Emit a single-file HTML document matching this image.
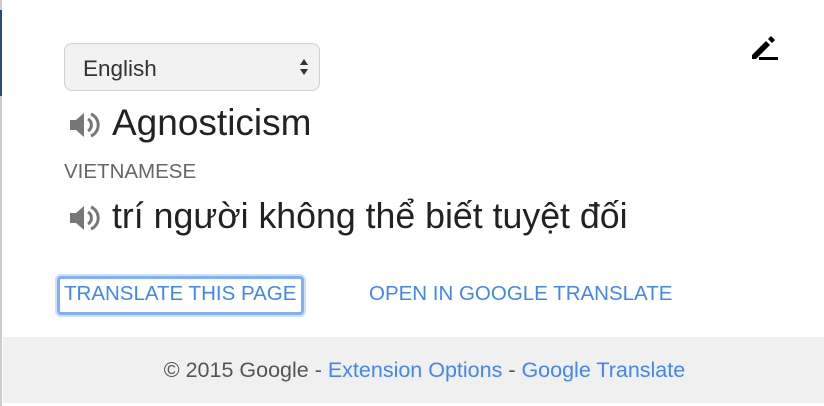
<!DOCTYPE html>
<html><head><meta charset="utf-8"><style>
body{margin:0;width:824px;height:406px;background:#fff;position:relative;overflow:hidden;font-family:"Liberation Sans",sans-serif}
.lb{position:absolute;left:0;top:0;width:2px;height:406px;background:#ccc}
.lbb{position:absolute;left:0;top:10px;width:2px;height:86px;background:#2a4a7a}
.sel{position:absolute;left:64px;top:43px;width:256px;height:48px;box-sizing:border-box;border:1px solid #d0d0d0;border-radius:8px;background:#f2f2f2}
.sel span{position:absolute;left:18px;top:12px;font-size:22.5px;color:#333}
.arr{position:absolute;right:10px;top:14px}
.t{position:absolute;color:#222}
.spk{position:absolute}
.foot{position:absolute;left:3px;top:337px;width:799px;padding-left:22px;height:66px;background:#f0f0f0;text-align:center;font-size:21.5px;color:#555;line-height:66px}
a{color:#4285f4;text-decoration:none}
.btn{position:absolute;font-size:20.5px;color:#4285f4;top:282px}
.focus{position:absolute;left:57px;top:276px;width:247px;height:39px;box-sizing:border-box;border:3px solid #7fb0f8;border-radius:4px;box-shadow:0 0 0 2px #cfe0fb}
</style></head><body>
<div class="lb"></div><div class="lbb"></div>
<div class="sel"><span>English</span>
<svg class="arr" width="10" height="18" viewBox="0 0 10 18"><path d="M5 1L9 7H1z M5 17L9 11H1z" fill="#333"/></svg></div>
<svg style="position:absolute;left:750px;top:35px" width="30" height="28" viewBox="0 0 30 28"><path d="M2 20L16 6l4 4L6 24H2z M18 4l3-3 4 4-3 3z" fill="#000"/><rect x="9" y="22" width="19" height="3" fill="#000"/></svg>
<svg class="spk" style="left:69px;top:111px" width="32" height="28" viewBox="0 0 32 28"><path d="M1 9h6l8-7v24l-8-7H1z" fill="#777"/><path d="M19 8a7 7 0 0 1 0 12M22 3a12 12 0 0 1 0 22" stroke="#777" stroke-width="3" fill="none"/></svg>
<div class="t" style="left:112px;top:102px;font-size:37px">Agnosticism</div>
<div class="t" style="left:64px;top:160px;font-size:20.5px;color:#666">VIETNAMESE</div>
<svg class="spk" style="left:69px;top:204px" width="32" height="28" viewBox="0 0 32 28"><path d="M1 9h6l8-7v24l-8-7H1z" fill="#777"/><path d="M19 8a7 7 0 0 1 0 12M22 3a12 12 0 0 1 0 22" stroke="#777" stroke-width="3" fill="none"/></svg>
<div class="t" style="left:112px;top:196px;font-size:35.7px">trí người không thể biết tuyệt đối</div>
<div class="focus"></div>
<div class="btn" style="left:64px">TRANSLATE THIS PAGE</div>
<div class="btn" style="left:369px">OPEN IN GOOGLE TRANSLATE</div>
<div class="foot">© 2015 Google - <a>Extension Options</a> - <a>Google Translate</a></div>
</body></html>
